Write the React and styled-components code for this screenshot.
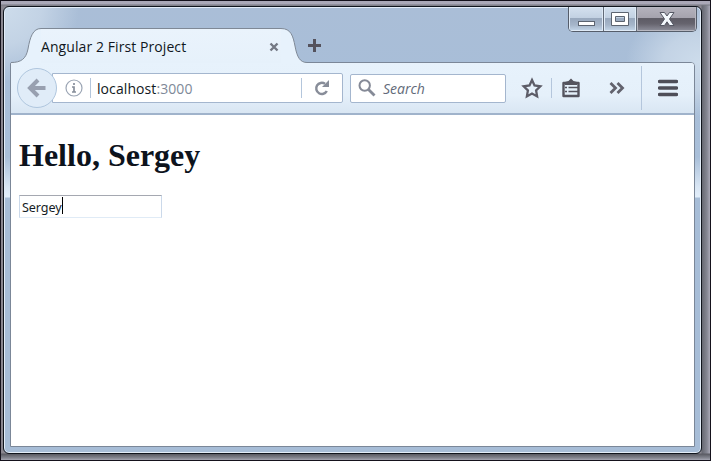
import React from "react";
import styled, { createGlobalStyle } from "styled-components";

const Global = createGlobalStyle`
  * { box-sizing: border-box; }
  html, body { margin: 0; width: 711px; height: 461px; overflow: hidden; }
  svg { display: block; }
`;

const Desktop = styled.div`
  width: 711px;
  height: 461px;
  padding: 5px 8px 6px 2px;
  border: 1px solid #15121c;
  background:
    linear-gradient(to bottom, #aaa8b7 0 3px, #777982 4px, transparent 5px),
    linear-gradient(to top, #a6a7b4 0, #858791 2px, #595a62 6px, transparent 7px),
    linear-gradient(to left, #aaa9b7 0, #858793 3px, #666871 8px, transparent 9px),
    #8a8790;
`;

const Window = styled.div`
  display: flex;
  flex-direction: column;
  width: 699px;
  height: 448px;
  padding: 0 6px 6px;
  border: 1px solid #10151d;
  border-radius: 6px;
  overflow: hidden;
  box-shadow: inset 0 0 0 1px #e3edf8;
  background:
    radial-gradient(ellipse 75px 75px at 0 0, #cddceb 0, #c3d3e5 50%, transparent 100%),
    radial-gradient(ellipse 75px 55px at 100% 55px, #cddceb 0, #c3d3e5 50%, transparent 100%),
    linear-gradient(to bottom, #aabed7 0, #a8bed8 70px, #a9bfd9 150px, #d9e6f4 180px, #e2eefa 190px, #a7bdd7 191px, #a7bdd7 100%);
`;

const TitleBar = styled.div`
  display: flex;
  justify-content: space-between;
  flex: none;
  height: 56px;
  margin-bottom: -1px;
  position: relative;
  z-index: 1;
`;

const TabStrip = styled.div`
  display: flex;
  align-items: flex-end;
  padding-left: 1px;
`;

const Tab = styled.div`
  display: flex;
  height: 35px;
`;

const TabBody = styled.div`
  display: flex;
  align-items: center;
  justify-content: space-between;
  width: 240px;
  padding: 1px 2px 0 0;
  border-top: 1px solid #7f8996;
  background: linear-gradient(#eaf3fc, #e6f1fb);
`;

const Label = styled.span`
  display: block;
  white-space: nowrap;
  letter-spacing: ${(p) => p.$spacing || 0}px;
  font: ${(p) => p.$italic ? "italic" : "normal"} 14px/20px "Open Sans", "Noto Sans", sans-serif;
  color: ${(p) => p.$color || "#101721"};
`;

const NewTab = styled.div`
  padding: 0 0 11px 1px;
`;

const Captions = styled.div`
  display: flex;
  width: 129px;
  height: 25px;
  margin-right: -2px;
  border: 1px solid #555d6a;
  border-top: 0;
  border-radius: 0 0 5px 5px;
  overflow: hidden;
`;

const CaptionButton = styled.div`
  display: grid;
  place-items: center;
  width: ${(p) => p.$width}px;
  border-right: ${(p) => (p.$close ? 0 : "1px solid #626b78")};
  box-shadow: inset 0 0 0 1px ${(p) => (p.$close ? "#b8b8c1" : "#dfeaf6")};
  background: ${(p) =>
    p.$close
      ? "linear-gradient(#b5b3bd 0, #a5a3ae 45%, #5d5b65 48%, #66646e 70%, #8f909c 100%)"
      : "linear-gradient(#d4e1ef 0, #c2d1e2 45%, #98a8bd 48%, #a6b6ca 75%, #c5d7ea 100%)"};
`;

const Client = styled.div`
  display: flex;
  flex-direction: column;
  flex: 1;
  border: 1px solid #7b8798;
  border-radius: 2px 4px 0 0;
  background: #fff;
  overflow: hidden;
`;

const Toolbar = styled.div`
  display: flex;
  align-items: center;
  height: 52px;
  flex: none;
  padding: 0 0 1px 6px;
  border-bottom: 2px solid #a0b3cb;
  background: linear-gradient(#e7f2fc 0, #e5f0fa 32px, #d9e6f3 100%);
`;

const BackButton = styled.div`
  display: grid;
  place-items: center;
  flex: none;
  width: 40px;
  height: 40px;
  border: 1px solid #afc6de;
  border-radius: 50%;
  background: #e0ecf8;
  position: relative;
  z-index: 1;
`;

const AddressBar = styled.div`
  display: flex;
  align-items: center;
  flex: none;
  width: 291px;
  height: 30px;
  margin-left: -5px;
  padding-left: 12px;
  border: 1px solid #a4b6ce;
  border-radius: 0 2px 2px 0;
  background: #fff;
`;

const AddressText = styled.div`
  width: 204px;
  padding-top: 2px;
`;

const SearchBar = styled.div`
  display: flex;
  align-items: center;
  gap: 7px;
  flex: none;
  width: 156px;
  height: 29px;
  margin: 1px 0 0 7px;
  padding-left: 7px;
  border: 1px solid #a4b6ce;
  border-radius: 2px;
  background: #fff;
`;

const Divider = styled.div`
  flex: none;
  width: 1px;
  height: ${(p) => p.$height || 20}px;
  margin: 0 ${(p) => p.$after || 0}px 0 ${(p) => p.$before || 0}px;
  background: #b4c6dc;
`;

const Slot = styled.div`
  flex: none;
  margin-left: ${(p) => p.$before}px;
`;

const SearchText = styled.div`
  padding-top: 2px;
`;

const Page = styled.div`
  flex: 1;
  padding: 22px 8px;
`;

const Heading = styled.h1`
  margin: 0;
  font: bold 32px/37px "Liberation Serif", serif;
  color: #0d131c;
`;

const Field = styled.div`
  display: flex;
  align-items: center;
  width: 143px;
  height: 23px;
  margin-top: 21px;
  padding: 2px 0 0 2px;
  border: 1px solid #cbd9ea;
  border-top-color: #a5a8b1;
  border-bottom-color: #e0ebf6;
`;

const Caret = styled.i`
  width: 1px;
  height: 17px;
  background: #000;
  margin-top: -4px;
`;

const Value = styled.span`
  width: 40px;
  white-space: nowrap;
  font: 12.6px/16px "Noto Sans", "Open Sans", sans-serif;
  letter-spacing: -0.1px;
  color: #151c26;
`;

const Host = styled.span`
  color: #111821;
`;

export default function App() {
  return (
    <>
      <Global />
      <Desktop>
        <Window>
          <TitleBar>
            <TabStrip>
              <Tab>
                <svg width="30" height="35">
                  <path d="M0 35V34.5C10 34.5 15 31 17 21C19 9 22 .5 30 .5V35Z" fill="#e7f2fc" />
                  <path d="M0 34.5C10 34.5 15 31 17 21C19 9 22 .5 30 .5" fill="none" stroke="#7f8996" />
                </svg>
                <TabBody>
                  <Label $spacing={0.08}>Angular 2 First Project</Label>
                  <svg width="10" height="10" viewBox="0 0 10 10">
                    <path d="M1.5 1.5l7 7m0-7l-7 7" stroke="#747984" strokeWidth="2.4" />
                  </svg>
                </TabBody>
                <svg width="26" height="35">
                  <path d="M0 .5C10 .5 12 8 14 18C16 29 19 34.5 26 34.5V35H0Z" fill="#e7f2fc" />
                  <path d="M0 .5C10 .5 12 8 14 18C16 29 19 34.5 26 34.5" fill="none" stroke="#7f8996" />
                </svg>
              </Tab>
              <NewTab>
                <svg width="13" height="13">
                  <path d="M6.5 0v13M0 6.5h13" stroke="#54525d" strokeWidth="3" />
                </svg>
              </NewTab>
            </TabStrip>
            <Captions>
              <CaptionButton $width={35}>
                <svg width="19" height="22">
                  <rect x="1.5" y="13.5" width="16" height="4" fill="#fff" stroke="#5c6470" />
                </svg>
              </CaptionButton>
              <CaptionButton $width={33}>
                <svg width="20" height="22">
                  <path d="M1.5 4.5h17v13h-17zM5.5 8.5h9v5h-9z" fill="#fff" fillRule="evenodd" stroke="#5c6470" />
                </svg>
              </CaptionButton>
              <CaptionButton $width={59} $close>
                <svg width="16" height="22">
                  <path d="M1 4.5h4.5L8 8l2.5-3.5H15L10.5 11l4.5 6.5h-4.5L8 13.8 5.5 17.5H1L5.5 11Z" fill="#f4f8fd" stroke="#555864" />
                </svg>
              </CaptionButton>
            </Captions>
          </TitleBar>
          <Client>
            <Toolbar>
              <BackButton>
                <svg width="20" height="20" viewBox="0 0 20 20">
                  <path d="M11 2L3 10l8 8M3.5 10h15" fill="none" stroke="#98a0b0" strokeWidth="4" />
                </svg>
              </BackButton>
              <AddressBar>
                <svg width="18" height="18" viewBox="0 0 18 18">
                  <circle cx="9" cy="9" r="8" fill="none" stroke="#9ba5b4" strokeWidth="1.2" />
                  <path d="M9 4v2M7 8h2v5M7 13h4" fill="none" stroke="#878e9b" strokeWidth="1.7" />
                </svg>
                <Divider $before={7} $after={6} />
                <AddressText>
                  <Label $spacing={0.08} $color="#7e8998"><Host>localhost</Host>:3000</Label>
                </AddressText>
                <Divider $after={12} />
                <svg width="16" height="16" viewBox="0 0 16 16">
                  <path d="M11 3.8A5.6 5.6 0 1 0 12.8 11" fill="none" stroke="#888d99" strokeWidth="2.5" />
                  <path d="M15 0v7H8Z" fill="#888d99" />
                </svg>
              </AddressBar>
              <SearchBar>
                <svg width="18" height="18" viewBox="0 0 18 18">
                  <circle cx="6.7" cy="6.5" r="5.2" fill="none" stroke="#858a97" strokeWidth="2" />
                  <path d="M10.5 10.5l6 6" stroke="#858a97" strokeWidth="2.8" />
                </svg>
                <SearchText>
                  <Label $italic $color="#626a79">Search</Label>
                </SearchText>
              </SearchBar>
              <Slot $before={15}>
                <svg width="22" height="22" viewBox="0 0 22 22">
                  <path d="M11 3l2.5 5.5 5.8.8-4.2 4.1 1 6-5.1-2.9-5.1 2.9 1-6-4.2-4.1 5.8-.8Z" fill="none" stroke="#5d5d68" strokeWidth="2.3" />
                </svg>
              </Slot>
              <Divider $before={8} $after={9} />
              <svg width="20" height="20" viewBox="0 0 20 20">
                <path d="M2.5 5h15v13h-15z" fill="none" stroke="#55545e" strokeWidth="2.4" strokeLinejoin="round" />
                <path d="M4 4l3.5-1L10 .5 12.5 3l3.5 1v3H4Z" fill="#55545e" />
                <path d="M4 9.5h2m1.5 0H17M4 13.5h2m1.5 0H17" stroke="#55545e" strokeWidth="1.6" />
              </svg>
              <Slot $before={28}>
                <svg width="16" height="14" viewBox="0 0 16 14">
                  <path d="M1.5 2l5 5-5 5M8.5 2l5 5-5 5" fill="none" stroke="#62626d" strokeWidth="2.8" />
                </svg>
              </Slot>
              <Divider $height={44} $before={16} $after={16} />
              <svg width="20" height="18">
                <path d="M1.5 2.5h17M1.5 9h17M1.5 15.5h17" stroke="#4e4e58" strokeWidth="3.5" strokeLinecap="round" />
              </svg>
            </Toolbar>
            <Page>
              <Heading>Hello, Sergey</Heading>
              <Field><Value>Sergey</Value><Caret /></Field>
            </Page>
          </Client>
        </Window>
      </Desktop>
    </>
  );
}
